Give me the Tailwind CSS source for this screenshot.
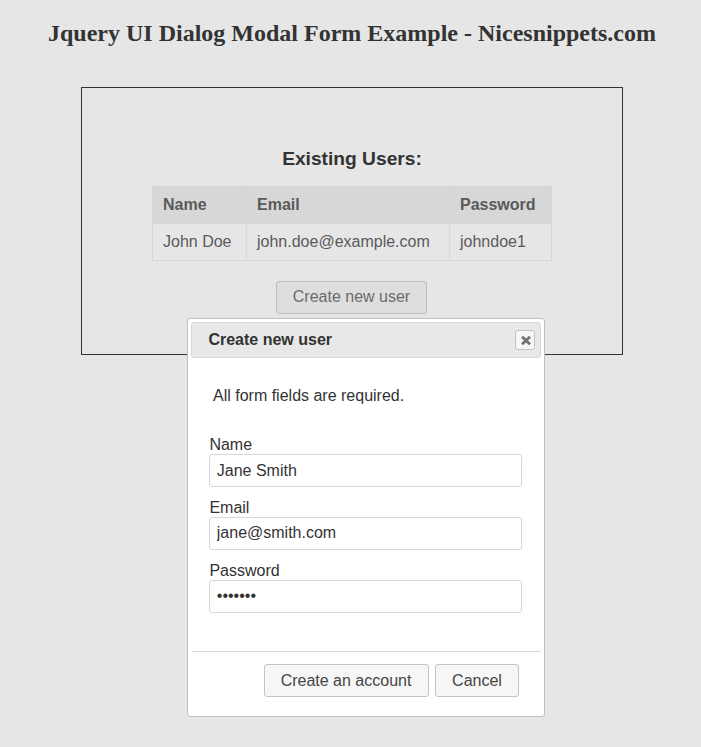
<!DOCTYPE html>
<html lang="en">
<head>
<meta charset="utf-8">
<title>Jquery UI Dialog Modal Form Example</title>
<script src="https://cdn.jsdelivr.net/npm/@tailwindcss/browser@4"></script>
</head>
<body class="relative h-[747px] w-[701px] overflow-hidden bg-[#e6e6e6] font-['Liberation_Sans',Arial,sans-serif] text-base text-[#333]">
<h1 class="ml-[3px] pt-5 text-center font-['Liberation_Serif',serif] text-2xl leading-[27px] font-bold whitespace-nowrap">Jquery UI Dialog Modal Form Example - Nicesnippets.com</h1>
<main class="mt-10 ml-[81px] flex h-[268px] w-[542px] flex-col items-center border border-[#333]">
  <h2 class="mt-[60px] text-[19.2px] leading-[22px] font-bold">Existing Users:</h2>
  <table class="mt-4 w-[399px] table-fixed border-collapse text-left leading-[18px] text-[#5a5a5a]">
    <colgroup><col class="w-[94px]"><col class="w-[203px]"><col class="w-[102px]"></colgroup>
    <thead><tr class="h-[37px] bg-[#d7d7d7]">
      <th class="border border-[#d4d4d4] px-2.5 py-0 font-bold">Name</th><th class="border border-[#d4d4d4] px-2.5 py-0 font-bold">Email</th><th class="border border-[#d4d4d4] px-2.5 py-0 font-bold">Password</th>
    </tr></thead>
    <tbody><tr class="h-[37px]">
      <td class="border border-[#d7d7d7] px-2.5 py-0">John Doe</td><td class="border border-[#d7d7d7] px-2.5 py-0">john.doe@example.com</td><td class="border border-[#d7d7d7] px-2.5 py-0">johndoe1</td>
    </tr></tbody>
  </table>
  <button class="mt-5 mr-px h-[33px] w-[151px] rounded-[3px] border border-[#bcbcbc] bg-[#dedede] pb-0.5 leading-[18px] text-[#6a6a6a]">Create new user</button>
</main>
<section role="dialog" class="absolute top-[318px] left-[187px] flex h-[399px] w-[358px] flex-col rounded-[3px] border border-[#c0c0c0] bg-white p-[3px]">
  <header class="flex h-9 shrink-0 items-center justify-between rounded-[3px] border border-[#d8d8d8] bg-[#e8e8e8] pr-[5px] pl-4">
    <span class="-mt-px pl-[0.4px] leading-[18px] font-bold">Create new user</span>
    <button aria-label="Close" class="flex size-5 items-center justify-center rounded-[3px] border border-[#c2c2c2] bg-[#f6f6f6]">
      <svg class="mt-px ml-px" width="10" height="9" viewBox="0 0 10 9" fill="none" stroke="#737373" stroke-width="2.9"><path d="M1 .8 9 8.2M9 .8 1 8.2"/></svg>
    </button>
  </header>
  <form class="flex flex-col px-[18px] leading-[18px]">
    <p class="mt-[29px] ml-1 mb-[31px]">All form fields are required.</p>
    <label class="pl-[0.4px]" for="name">Name</label>
    <input id="name" type="text" value="Jane Smith" class="mb-3 h-[33px] w-[313px] rounded-[3px] border border-[#d7d7d7] px-[6.8px]">
    <label class="pl-[0.4px]" for="email">Email</label>
    <input id="email" type="text" value="jane@smith.com" class="mb-3 h-[33px] w-[313px] rounded-[3px] border border-[#d7d7d7] px-[6.8px] pb-0.5">
    <label class="pl-[0.4px]" for="password">Password</label>
    <input id="password" type="password" value="xxxxxxx" class="h-[33px] w-[313px] rounded-[3px] border border-[#d7d7d7] px-[6.8px] pb-0.5">
  </form>
  <footer class="mt-[38px] ml-px flex justify-end gap-1.5 border-t border-[#d8d8d8] pt-3 pr-[22px] leading-[18px] text-[#454545]">
    <button class="h-[33px] w-[165px] rounded-[3px] border border-[#c3c3c3] bg-[#f6f6f6] pr-px">Create an account</button>
    <button class="h-[33px] w-[84px] rounded-[3px] border border-[#c3c3c3] bg-[#f6f6f6]">Cancel</button>
  </footer>
</section>
</body>
</html>
